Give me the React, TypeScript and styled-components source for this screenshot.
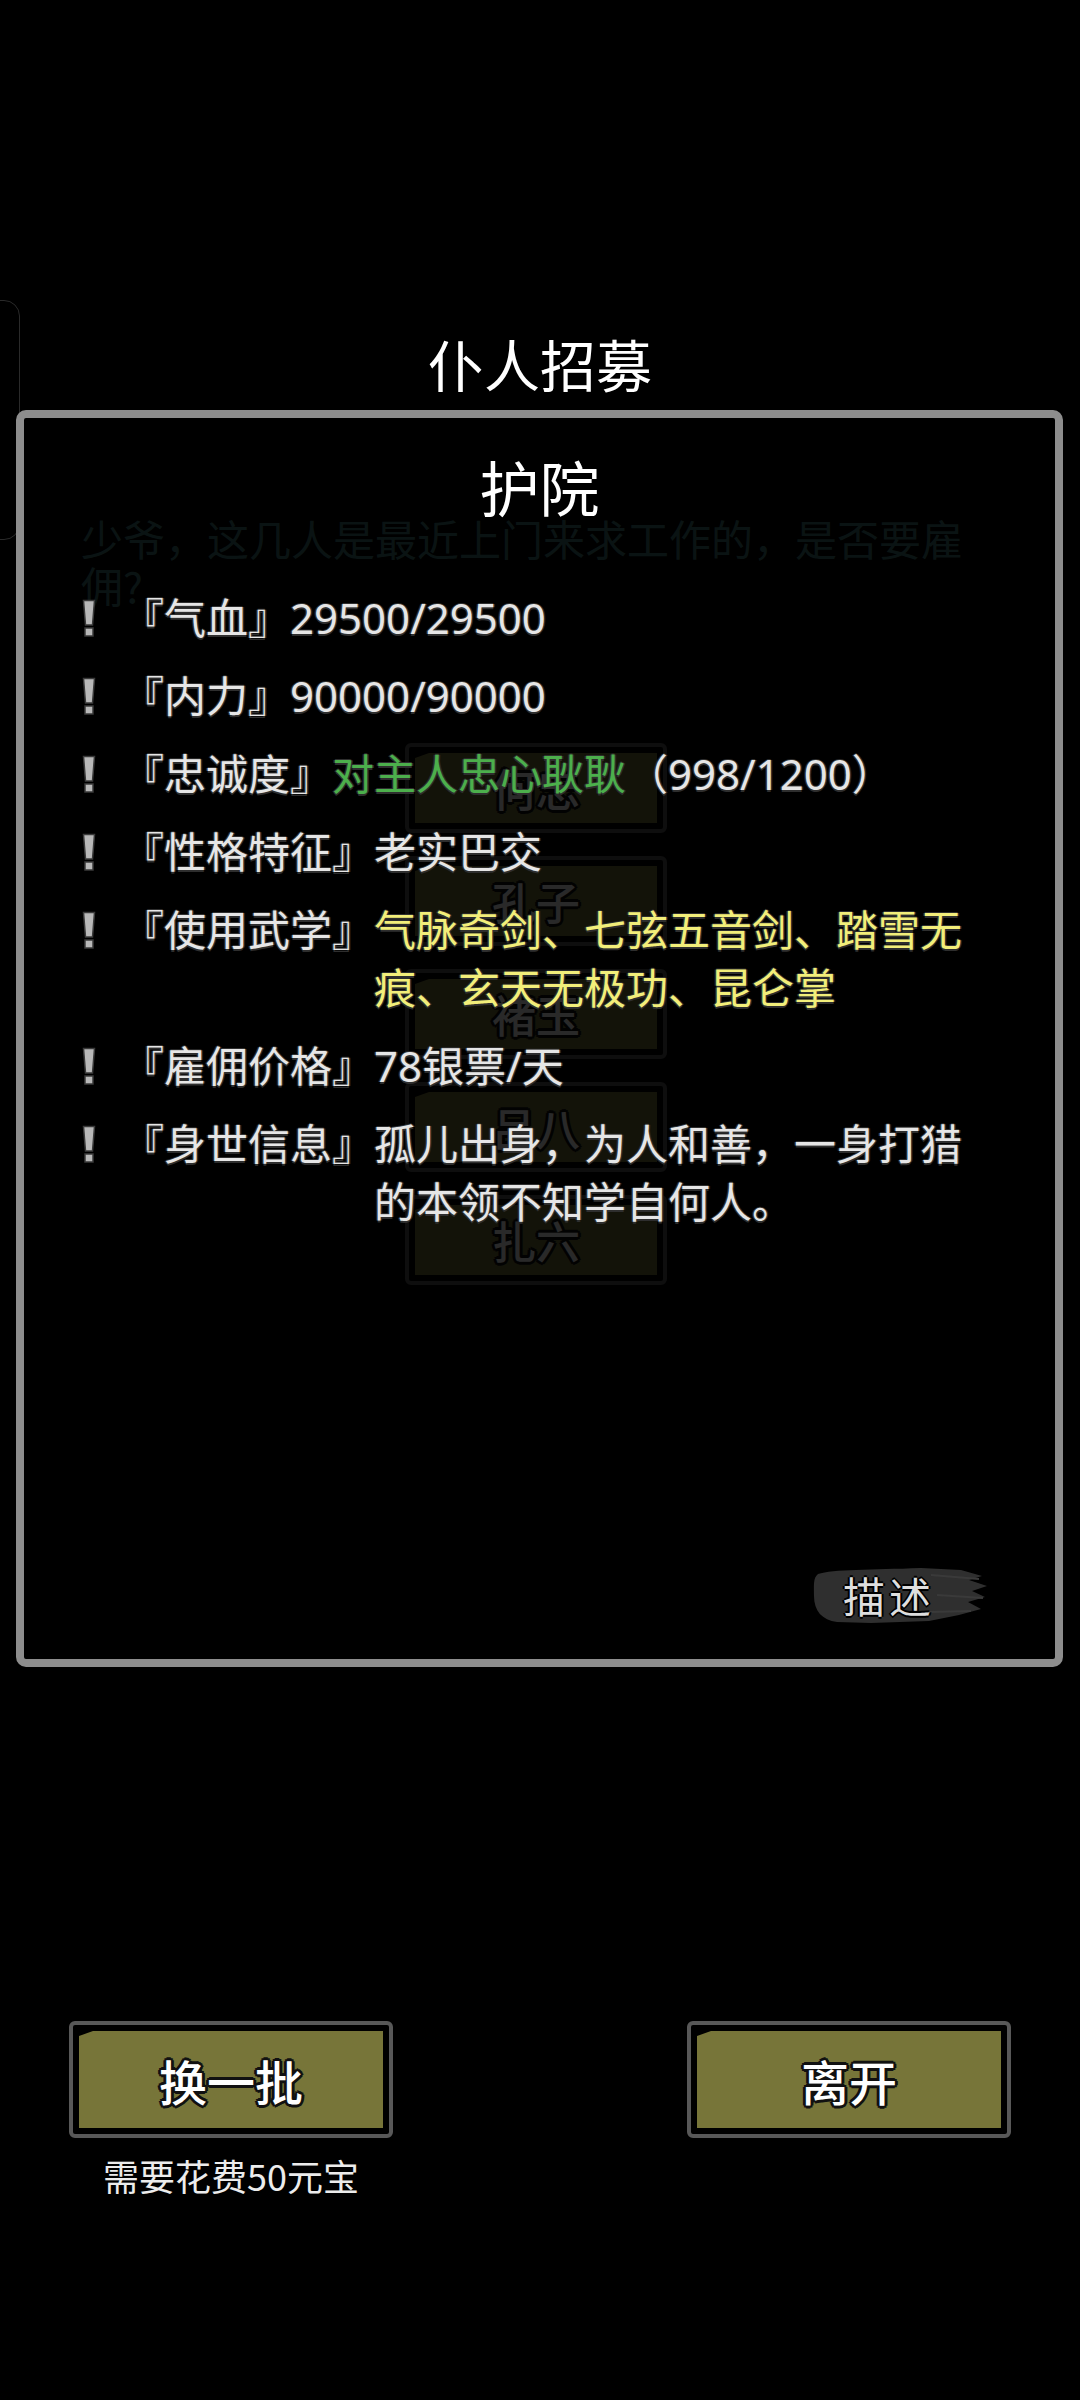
import React from "react";
import styled, { createGlobalStyle } from "styled-components";

const GlobalStyle = createGlobalStyle`
  html, body {
    margin: 0;
    padding: 0;
    background: #000;
  }
  body {
    font-family: "Noto Sans CJK SC", "Noto Sans", sans-serif;
  }
`;

const Screen = styled.div`
  position: relative;
  width: 1080px;
  height: 2400px;
  overflow: hidden;
  background: #000;
  display: flex;
  flex-direction: column;
  padding-top: 328px;
  box-sizing: border-box;
`;

const SideTab = styled.div`
  position: absolute;
  left: -40px;
  top: 300px;
  width: 58px;
  height: 238px;
  border: 1px solid #2a2a2a;
  border-radius: 16px;
`;

const PageTitle = styled.h1`
  margin: 0;
  text-align: center;
  font-size: 56px;
  line-height: 70px;
  font-weight: 400;
  color: #fff;
`;

const Body = styled.div`
  padding: 116px 110px 0 81px;
  display: flex;
  flex-direction: column;
`;

const Intro = styled.p`
  margin: 0;
  font-size: 42px;
  line-height: 47px;
  color: #427878;
`;

const NameList = styled.div`
  margin: 135px 0 0 324px;
  display: flex;
  flex-direction: column;
  gap: 23px;
`;

const Frame = styled.div<{ $w: number; $h: number }>`
  width: ${(p) => p.$w}px;
  height: ${(p) => p.$h}px;
  box-sizing: border-box;
  border: 4px solid #585858;
  border-radius: 6px;
  background: #000;
  padding: 6px;
  display: flex;
`;

const Fill = styled.span<{ $fs: number }>`
  flex: 1;
  display: flex;
  align-items: center;
  justify-content: center;
  background: #777539;
  clip-path: polygon(14px 0, 100% 0, 100% 100%, 0 100%, 0 5px);
  color: #fff;
  font-size: ${(p) => p.$fs}px;
  font-weight: 500;
  text-shadow: -3px 0 #111, 3px 0 #111, 0 -3px #111, 0 3px #111,
    -2px -2px #111, 2px 2px #111, -2px 2px #111, 2px -2px #111;
`;

const Footer = styled.div`
  margin-top: auto;
  padding: 0 69px 203px;
  display: flex;
  justify-content: space-between;
  align-items: flex-start;
`;

const ButtonCol = styled.div`
  display: flex;
  flex-direction: column;
  align-items: center;
  gap: 15px;
`;

const Cost = styled.div`
  font-size: 36px;
  line-height: 44px;
  color: #ececec;
`;

const Modal = styled.div`
  position: absolute;
  top: 410px;
  left: 16px;
  width: 1047px;
  height: 1257px;
  box-sizing: border-box;
  border: 8px solid #8d8d8d;
  border-radius: 10px;
  background: rgba(0, 0, 0, 0.84);
  display: flex;
  flex-direction: column;
  padding-top: 33px;
`;

const ModalTitle = styled.h2`
  margin: 0;
  text-align: center;
  font-size: 60px;
  line-height: 70px;
  font-weight: 400;
  color: #fff;
`;

const Rows = styled.div`
  margin-top: 68px;
  padding: 0 65px 0 58px;
  display: flex;
  flex-direction: column;
  gap: 20px;
`;

const Row = styled.div`
  display: flex;
  align-items: flex-start;
  font-family: "Noto Sans", "Noto Sans CJK SC", sans-serif;
  font-size: 42px;
  line-height: 58px;
  color: #e6e6e6;
  text-shadow: -1.5px 0 #2e2e2e, 1.5px 0 #2e2e2e, 0 -1.5px #2e2e2e, 0 1.5px #2e2e2e;
`;

const Bang = styled.svg`
  flex-shrink: 0;
  width: 14px;
  height: 38px;
  margin: 10px 26px 0 0;
`;

const Label = styled.span`
  flex-shrink: 0;
  white-space: nowrap;
`;

const Value = styled.span`
  flex: 1;
`;

const Tone = styled.span<{ $c: string }>`
  color: ${(p) => p.$c};
`;

const ModalFooter = styled.div`
  margin-top: auto;
  display: flex;
  justify-content: flex-end;
  padding: 0 68px 34px 0;
`;

const Brush = styled.div`
  position: relative;
  width: 176px;
  height: 60px;
  display: flex;
  align-items: center;
  padding-left: 32px;
  box-sizing: border-box;
  svg {
    position: absolute;
    inset: 0;
  }
  span {
    position: relative;
    font-size: 42px;
    line-height: 60px;
    color: #dedede;
    letter-spacing: 4px;
    text-shadow: -2px 0 #000, 2px 0 #000, 0 -2px #000, 0 2px #000;
  }
`;

const BangIcon = () => (
  <Bang viewBox="0 0 14 38">
    <path d="M1.5 1.5 H12.5 L10.5 26 H3.5 Z" fill="#b8b8b8" stroke="#3a3a3a" strokeWidth="1.5" />
    <rect x="3" y="29" width="8" height="8" fill="#b8b8b8" stroke="#3a3a3a" strokeWidth="1.5" />
  </Bang>
);

const GameButton = ({ label, w, h, fs }: { label: string; w: number; h: number; fs: number }) => (
  <Frame $w={w} $h={h}>
    <Fill $fs={fs}>{label}</Fill>
  </Frame>
);

const names = ["何忠", "孔子", "褚玉", "吕八", "扎六"];

const stats: { label: string; value: React.ReactNode }[] = [
  { label: "『气血』", value: "29500/29500" },
  { label: "『内力』", value: "90000/90000" },
  {
    label: "『忠诚度』",
    value: (
      <>
        <Tone $c="#4caf4c">对主人忠心耿耿</Tone>（998/1200）
      </>
    ),
  },
  { label: "『性格特征』", value: "老实巴交" },
  {
    label: "『使用武学』",
    value: <Tone $c="#f2ee7a">气脉奇剑、七弦五音剑、踏雪无痕、玄天无极功、昆仑掌</Tone>,
  },
  { label: "『雇佣价格』", value: "78银票/天" },
  { label: "『身世信息』", value: "孤儿出身，为人和善，一身打猎的本领不知学自何人。" },
];

export default function App() {
  return (
    <>
      <GlobalStyle />
      <Screen>
        <SideTab />
        <PageTitle>仆人招募</PageTitle>
        <Body>
          <Intro>少爷，这几人是最近上门来求工作的，是否要雇佣?</Intro>
          <NameList>
            {names.map((n) => (
              <GameButton key={n} label={n} w={262} h={90} fs={44} />
            ))}
          </NameList>
        </Body>
        <Footer>
          <ButtonCol>
            <GameButton label="换一批" w={324} h={117} fs={48} />
            <Cost>需要花费50元宝</Cost>
          </ButtonCol>
          <GameButton label="离开" w={324} h={117} fs={48} />
        </Footer>

        <Modal>
          <ModalTitle>护院</ModalTitle>
          <Rows>
            {stats.map((s) => (
              <Row key={s.label}>
                <BangIcon />
                <Label>{s.label}</Label>
                <Value>{s.value}</Value>
              </Row>
            ))}
          </Rows>
          <ModalFooter>
            <Brush>
              <svg viewBox="0 0 176 60" width="176" height="60">
                <path
                  d="M7 9 C22 4 60 5 110 3 L150 5 L171 11 L158 15 L176 21 L161 26 L174 32 L157 37 L170 44 L148 50 L118 56 L60 58 L26 57 C11 55 3 46 3 31 C3 20 2 13 7 9 Z"
                  fill="#2f2f2f"
                />
                <path d="M120 10 L168 14 M126 30 L172 33 M118 47 L160 46" stroke="#3a3a3a" strokeWidth="2" />
              </svg>
              <span>描述</span>
            </Brush>
          </ModalFooter>
        </Modal>
      </Screen>
    </>
  );
}
